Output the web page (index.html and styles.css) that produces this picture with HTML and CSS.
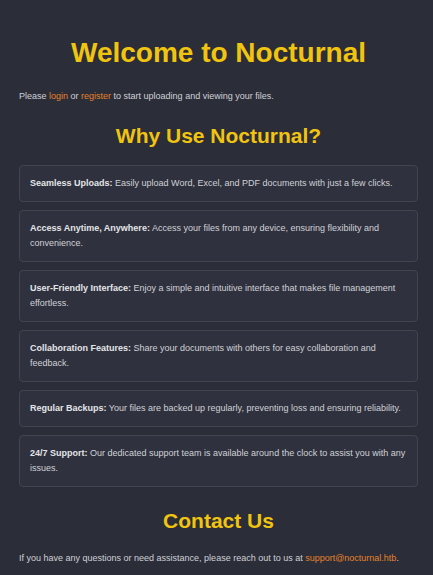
FILE: index.html
```html
<!DOCTYPE html>
<html lang="en">
<head>
<meta charset="utf-8">
<title>Nocturnal</title>
<link rel="stylesheet" href="styles.css">
</head>
<body>
<main class="page">
  <h1 class="title">Welcome to Nocturnal</h1>
  <p class="lead">Please <a href="#">login</a> or <a href="#">register</a> to start uploading and viewing your files.</p>

  <h2 class="section-title">Why Use Nocturnal?</h2>
  <ul class="features">
    <li class="feature"><strong>Seamless Uploads:</strong> Easily upload Word, Excel, and PDF documents with just a few clicks.</li>
    <li class="feature"><strong>Access Anytime, Anywhere:</strong> Access your files from any device, ensuring flexibility and convenience.</li>
    <li class="feature"><strong>User-Friendly Interface:</strong> Enjoy a simple and intuitive interface that makes file management effortless.</li>
    <li class="feature"><strong>Collaboration Features:</strong> Share your documents with others for easy collaboration and feedback.</li>
    <li class="feature"><strong>Regular Backups:</strong> Your files are backed up regularly, preventing loss and ensuring reliability.</li>
    <li class="feature"><strong>24/7 Support:</strong> Our dedicated support team is available around the clock to assist you with any issues.</li>
  </ul>

  <h2 class="section-title contact-title">Contact Us</h2>
  <p class="contact">If you have any questions or need assistance, please reach out to us at <a href="#">support@nocturnal.htb</a>.</p>
</main>
</body>
</html>
```

FILE: styles.css
```css
html, body {
  margin: 0;
  padding: 0;
  background: #2b2d39;
}

body {
  font-family: "Liberation Sans", Arial, sans-serif;
  font-size: 9px;
  line-height: 15px;
  color: #cfd1d6;
}

.page {
  padding: 0 15px 0 19px;
}

.title {
  margin: 37px 0 20px;
  font-size: 28px;
  line-height: 32px;
  font-weight: bold;
  text-align: center;
  color: #f1c40f;
}

.lead {
  margin: 0;
}

a {
  color: #e5832a;
  text-decoration: none;
}

.section-title {
  margin: 20px 0 17px;
  font-size: 21px;
  line-height: 24px;
  font-weight: bold;
  text-align: center;
  color: #f1c40f;
}

.features {
  list-style: none;
  margin: 0;
  padding: 0;
  display: flex;
  flex-direction: column;
  gap: 8px;
}

.feature {
  background: #2f323e;
  border: 1px solid #42454f;
  border-radius: 4px;
  padding: 10px;
}

.feature strong {
  color: #e4e5e8;
}

.contact-title {
  margin: 22px 0 18px;
}

.contact {
  margin: 0;
}
```
